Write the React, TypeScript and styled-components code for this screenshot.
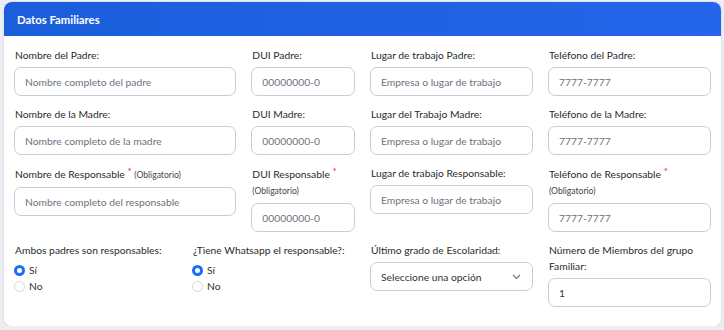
import React from "react";
import styled, { createGlobalStyle } from "styled-components";

const GlobalStyle = createGlobalStyle`
  html, body {
    margin: 0;
    padding: 0;
    background: #eceef2;
  }
  body {
    padding: 2px 3px 0 4px;
    font-family: "Lato", "Liberation Sans", sans-serif;
    color: #333;
  }
`;

type Field = {
  label: string;
  placeholder?: string;
  value?: string;
  required?: boolean;
};

const rows: Field[][] = [
  [
    { label: "Nombre del Padre:", placeholder: "Nombre completo del padre" },
    { label: "DUI Padre:", placeholder: "00000000-0" },
    { label: "Lugar de trabajo Padre:", placeholder: "Empresa o lugar de trabajo" },
    { label: "Teléfono del Padre:", placeholder: "7777-7777" },
  ],
  [
    { label: "Nombre de la Madre:", placeholder: "Nombre completo de la madre" },
    { label: "DUI Madre:", placeholder: "00000000-0" },
    { label: "Lugar del Trabajo Madre:", placeholder: "Empresa o lugar de trabajo" },
    { label: "Teléfono de la Madre:", placeholder: "7777-7777" },
  ],
  [
    {
      label: "Nombre de Responsable",
      placeholder: "Nombre completo del responsable",
      required: true,
    },
    { label: "DUI Responsable", placeholder: "00000000-0", required: true },
    {
      label: "Lugar de trabajo Responsable:",
      placeholder: "Empresa o lugar de trabajo",
    },
    {
      label: "Teléfono de Responsable",
      placeholder: "7777-7777",
      required: true,
    },
  ],
];

const RadioGroup = (props: { label: string; name: string }) => (
  <Cell>
    <Label>{props.label}</Label>
    <RadioList>
      <RadioRow>
        <RadioInput type="radio" name={props.name} defaultChecked />
        <span>Sí</span>
      </RadioRow>
      <RadioRow>
        <RadioInput type="radio" name={props.name} />
        <span>No</span>
      </RadioRow>
    </RadioList>
  </Cell>
);

export default function App() {
  return (
    <>
      <GlobalStyle />
      <Card>
        <Header>Datos Familiares</Header>
        <Body>
          {rows.map((row, i) => (
            <Row key={i} cols="4fr 2fr 3fr 3fr">
              {row.map((f) => (
                <Cell key={f.label}>
                  <Label>
                    {f.label}
                    {f.required && (
                      <>
                        {" "}
                        <Star>*</Star> <Note>(Obligatorio)</Note>
                      </>
                    )}
                  </Label>
                  <Input placeholder={f.placeholder} />
                </Cell>
              ))}
            </Row>
          ))}
          <Row cols="1fr 1fr 1fr 1fr">
            <RadioGroup label="Ambos padres son responsables:" name="ambos" />
            <RadioGroup
              label="¿Tiene Whatsapp el responsable?:"
              name="whatsapp"
            />
            <Cell>
              <Label>Último grado de Escolaridad:</Label>
              <SelectBox>
                <span>Seleccione una opción</span>
                <svg width="9" height="6" viewBox="0 0 9 6">
                  <path
                    d="M1 1l3.5 3.5L8 1"
                    fill="none"
                    stroke="#777"
                    strokeWidth="1.2"
                  />
                </svg>
              </SelectBox>
            </Cell>
            <Cell>
              <Label>Número de Miembros del grupo Familiar:</Label>
              <Input defaultValue="1" />
            </Cell>
          </Row>
        </Body>
      </Card>
    </>
  );
}

const Card = styled.div`
  background: #fff;
  border-radius: 8px;
  box-shadow: 0 0 0 1px #e0e3e8, 0 1px 3px rgba(0, 0, 0, 0.06);
  overflow: hidden;
  height: 324px;
`;

const Header = styled.div`
  height: 34px;
  display: flex;
  align-items: center;
  padding-left: 13px;
  background: linear-gradient(90deg, #1a5edb 0%, #2565ea 100%);
  color: #fff;
  font-weight: 700;
  font-size: 11.3px;
`;

const Body = styled.div`
  padding: 11px 2.5px 0;
`;

type RowProps = { cols: string };

const Row = styled.div<RowProps>`
  display: grid;
  grid-template-columns: ${(p) =>
    p.cols
      .split(" ")
      .map((c) => `minmax(0, ${c})`)
      .join(" ")};
  margin-bottom: 10px;
`;

const Cell = styled.div`
  padding: 0 7.5px;
  display: flex;
  flex-direction: column;
`;

const Label = styled.div`
  font-size: 10.3px;
  line-height: 16px;
  color: #2b2b2b;
  margin-bottom: 4px;
  padding-left: 1px;
`;

const Star = styled.span`
  color: #e0245e;
  font-size: 10px;
  vertical-align: 3px;
  line-height: 12px;
`;

const Note = styled.span`
  font-size: 8.6px;
  color: #444;
`;

const Input = styled.input`
  box-sizing: border-box;
  height: 29px;
  width: 100%;
  border: 1px solid #c9ced6;
  border-radius: 7px;
  padding: 0 10px;
  font-family: inherit;
  font-size: 10.3px;
  color: #333;
  outline: none;

  &::placeholder {
    color: #6c727c;
  }
`;

const SelectBox = styled.div`
  box-sizing: border-box;
  height: 29px;
  border: 1px solid #c9ced6;
  border-radius: 7px;
  padding: 0 11px 0 10px;
  display: flex;
  align-items: center;
  justify-content: space-between;
  font-size: 10.3px;
  color: #333;
`;

const RadioList = styled.div`
  display: flex;
  flex-direction: column;
`;

const RadioRow = styled.label`
  display: flex;
  align-items: center;
  gap: 4px;
  height: 16px;
  font-size: 10.3px;
  color: #333;
`;

const RadioInput = styled.input`
  appearance: none;
  margin: 0;
  width: 11px;
  height: 11px;
  border-radius: 50%;
  border: 1px solid #d3d7dd;
  background: #fff;
  box-sizing: border-box;

  &:checked {
    border: 3px solid #1a6ef5;
  }
`;
